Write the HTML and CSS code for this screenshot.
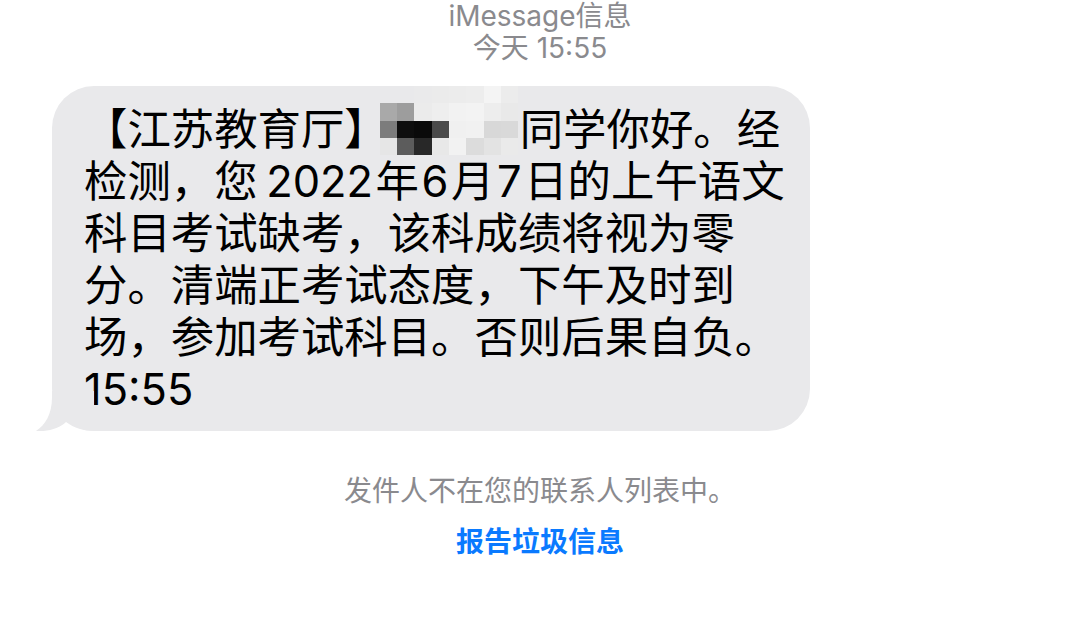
FILE: index.html
```html
<!DOCTYPE html>
<html lang="zh-CN">
<head>
    <meta charset="UTF-8">
    <meta name="viewport" content="width=device-width, initial-scale=1.0">
    <title>信息</title>
    <link rel="stylesheet" href="styles.css">
</head>
<body>

    <div id="thread">
        <div class="stamp">
            <div class="service">iMessage信息</div>
            <div class="time">今天 15:55</div>
        </div>

        <div class="bubble">
            <p class="text">【江苏教育厅】<span class="mosaic">
                <i style="background:#e9e9eb"></i><i style="background:#e9e9eb"></i><i style="background:#eaeaeb"></i><i style="background:#ebebeb"></i><i style="background:#ececec"></i><i style="background:#ededed"></i><i style="background:#f4f4f4"></i><i style="background:#ececec"></i>
                <i style="background:#a9a9a9"></i><i style="background:#9d9d9d"></i><i style="background:#ebebeb"></i><i style="background:#eeeeee"></i><i style="background:#f2f2f2"></i><i style="background:#f3f3f3"></i><i style="background:#ededed"></i><i style="background:#e9e9e9"></i>
                <i style="background:#7c7c7c"></i><i style="background:#0e0e0e"></i><i style="background:#0a0a0a"></i><i style="background:#4a4a4a"></i><i style="background:#f0f0f0"></i><i style="background:#f1f1f1"></i><i style="background:#d8d8d8"></i><i style="background:#d9d9d9"></i>
                <i style="background:#e6e6e6"></i><i style="background:#5c5c5c"></i><i style="background:#282828"></i><i style="background:#e8e8e8"></i><i style="background:#f2f2f2"></i><i style="background:#dcdcdc"></i><i style="background:#e3e3e3"></i><i style="background:#eaeaea"></i>
            </span>同学你好。经<br>检测，您<span class="num first">2022</span>年<span class="num">6</span>月<span class="num">7</span>日的上午语文<br>科目考试缺考，该科成绩将视为零<br>分。清端正考试态度，下午及时到<br>场，参加考试科目。否则后果自负。<br>15:55</p>
            <svg class="tail" width="70" height="40" viewBox="0 0 70 40">
                <path d="M20 0 L20 6 C20 24 13 34 4 40 C16 41 28 37 34 31 C42 37 52 40 62 40 L62 0 Z" fill="#e9e9eb"/>
            </svg>
        </div>

        <div class="notice">发件人不在您的联系人列表中。</div>
        <div class="report">报告垃圾信息</div>
    </div>

</body>
</html>
```

FILE: styles.css
```css
body {
    margin: 0;
    padding: 0;
    background: #ffffff;
    font-family: Inter, "Noto Sans CJK SC", sans-serif;
    color: #000000;
}

#thread {
    width: 1080px;
    height: 634px;
    overflow: hidden;
    padding: 0 52px;
    box-sizing: border-box;
}

.stamp {
    text-align: center;
    color: #8a8a8e;
    font-size: 28px;
    line-height: 32px;
}

.bubble {
    position: relative;
    margin-top: 22px;
    width: 758px;
    box-sizing: border-box;
    padding: 17px 30px 16px 32px;
    background: #e9e9eb;
    border-radius: 42px;
}

.text {
    margin: 0;
    font-size: 43.4px;
    line-height: 52px;
    white-space: nowrap;
}

.num {
    margin: 0 0.06em;
}

.num.first {
    margin-left: 0.2em;
}

.mosaic {
    display: inline-grid;
    grid-template-columns: repeat(8, 17.3px);
    grid-template-rows: repeat(4, 17.3px);
    vertical-align: top;
    margin: -17px 2px 0 -8px;
    width: 138px;
}

.mosaic i {
    display: block;
}

.tail {
    position: absolute;
    left: -20px;
    bottom: 0;
}

.notice {
    margin-top: 42px;
    text-align: center;
    color: #8a8a8e;
    font-size: 28px;
    line-height: 36px;
}

.report {
    margin-top: 15px;
    text-align: center;
    color: #0a7aff;
    font-size: 28px;
    font-weight: 600;
    line-height: 36px;
}
```
